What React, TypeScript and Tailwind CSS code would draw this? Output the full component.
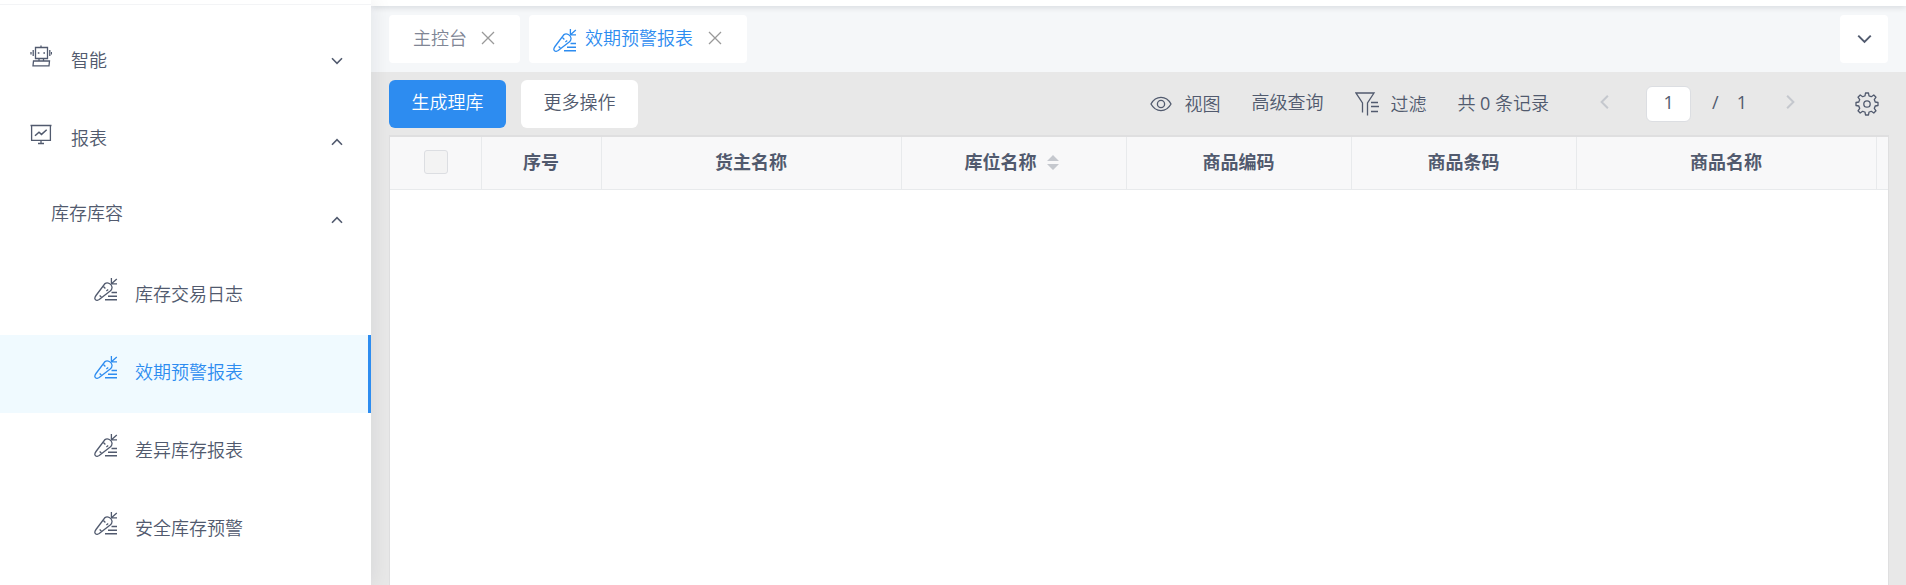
import type { ReactNode } from "react";

type IconProps = { className?: string };

function RobotIcon({ className }: IconProps) {
  return (
    <svg className={className} viewBox="0 0 22 22" fill="none" stroke="currentColor" strokeWidth="1.3" aria-hidden="true">
      <path d="M11 0.5v2M5.5 2.5h12v11h-12zM9 13.5v2.5M13.5 13.5v2.5M3.5 16h16l-0.5 4.8H3z" />
      <path d="M3.2 5v6M1 7v2.4M19.8 5v6M21.6 7v2.4" />
      <path d="M7.8 8h1.6M13.4 8h1.6" strokeWidth="1.6" />
    </svg>
  );
}

function ReportIcon({ className }: IconProps) {
  return (
    <svg className={className} viewBox="0 0 22 22" fill="none" stroke="currentColor" strokeWidth="1.3" aria-hidden="true">
      <path d="M0.5 2.5h21M1.6 2.5v14.8h18.8V2.5M11 17.3v3.2M8 20.5h6" />
      <path d="M5 12.8l4-3.6 2.5 2.2 5.2-4.6" strokeWidth="1.5" />
    </svg>
  );
}

function CarrotIcon({ className }: IconProps) {
  return (
    <svg className={className} viewBox="0 0 24 24" fill="none" stroke="currentColor" strokeWidth="1.3" aria-hidden="true">
      <path d="M11 6.6c2.600-1.800 6.600 0.400 7 3.400 0.200 1.800-0.600 3.100-1.800 4.100L5.200 22.600c-1.500 1.100-3.400 1-4.100-0.300-0.600-1.100-0.200-2.300 0.900-3.800z" />
      <path d="M17.400 1v5.800h5.600M17.200 7l5.600-5M9.400 9.500l2 2M5.600 18.400l1.800 1.500M12.400 14l1.800-1.500" />
      <path d="M17.500 15.500H23M14 19.300h9M11 22.800h12" strokeWidth="1.400" />
    </svg>
  );
}

function EyeIcon({ className }: IconProps) {
  return (
    <svg className={className} viewBox="0 0 22 16" fill="none" stroke="currentColor" strokeWidth="1.3" aria-hidden="true">
      <path d="M1 8c2.2-4 6-6.600 10-6.600S18.800 4 21 8c-2.200 4-6 6.600-10 6.600S3.200 12 1 8z" />
      <circle cx="11" cy="8" r="3.600" />
    </svg>
  );
}

function FilterIcon({ className }: IconProps) {
  return (
    <svg className={className} viewBox="0 0 24 24" fill="none" stroke="currentColor" strokeWidth="1.3" aria-hidden="true">
      <path d="M7.500 20.500V11L1 1h18l-6.500 10v12.500" />
      <path d="M16 10.500h7M16 14.500h8M16 19.500h7" />
    </svg>
  );
}

function GearIcon({ className }: IconProps) {
  return (
    <svg className={className} viewBox="0 0 24 24" fill="none" stroke="currentColor" strokeWidth="1.3" strokeLinejoin="round" aria-hidden="true">
      <path d="M10.500 1h3l0.500 2.800q1.700 0.500 2.300 0.900l2.500-1.700 2.200 2.200-1.700 2.500q0.700 1.300 0.900 2.300L23 10.500v3l-2.800 0.500q-0.300 1.200-0.900 2.300l1.700 2.500-2.200 2.200-2.500-1.700q-1.200 0.700-2.300 0.900L13.500 23h-3l-0.500-2.800q-1.200-0.300-2.300-0.900l-2.500 1.700-2.200-2.200 1.700-2.500q-0.600-1.100-0.900-2.300L1 13.500v-3l2.800-0.500q0.300-1.200 0.900-2.300L3 5.200 5.200 3l2.500 1.700q1.100-0.600 2.300-0.900z" />
      <circle cx="12" cy="12" r="3.200" />
    </svg>
  );
}

function Chevron({ className }: IconProps) {
  return (
    <svg className={className} viewBox="0 0 12 8" fill="none" stroke="currentColor" strokeWidth="1.600" aria-hidden="true">
      <path d="M1 1.300l5 5 5-5" />
    </svg>
  );
}

function CloseIcon() {
  return (
    <svg className="h-3.5 w-3.5" viewBox="0 0 14 14" fill="none" stroke="currentColor" strokeWidth="1.300" aria-hidden="true">
      <path d="M1 1l12 12M13 1L1 13" />
    </svg>
  );
}

const reports = [
  { name: "库存交易日志", active: false },
  { name: "效期预警报表", active: true },
  { name: "差异库存报表", active: false },
  { name: "安全库存预警", active: false },
];

const columns = [
  { name: "序号", width: "w-[120px]" },
  { name: "货主名称", width: "w-[300px]" },
  { name: "库位名称", width: "w-[225px]", sortable: true },
  { name: "商品编码", width: "w-[225px]" },
  { name: "商品条码", width: "w-[225px]" },
  { name: "商品名称", width: "w-[300px]" },
];

function MenuGroup({ icon, name, open }: { icon: ReactNode; name: string; open: boolean }) {
  return (
    <button type="button" aria-expanded={open} className="flex h-[78px] w-full items-center pr-7 pb-1 pl-[30px] text-left">
      {icon}
      <span className="ml-[19px] flex-1">{name}</span>
      <Chevron className={open ? "mt-2 h-2 w-3 rotate-180" : "mt-0.5 h-2 w-3"} />
    </button>
  );
}

function Sidebar() {
  return (
    <aside className="z-10 w-[371px] shrink-0 bg-white pt-1 shadow-[2px_0_20px_rgba(0,21,41,0.08)]">
      <nav className="border-t border-gray-100 pt-[18px]">
        <MenuGroup icon={<RobotIcon className="mb-2 h-[22px] w-[22px]" />} name="智能" open={false} />
        <MenuGroup icon={<ReportIcon className="mb-2 h-[22px] w-[22px]" />} name="报表" open />
        <button type="button" aria-expanded="true" className="flex h-[78px] w-full items-center pr-7 pb-1 pl-[51px] text-left">
          <span className="mb-1.5 flex-1">库存库容</span>
          <Chevron className="mt-2 h-2 w-3 rotate-180" />
        </button>
        {reports.map((item) => (
          <a
            key={item.name}
            href="#"
            className={
              item.active
                ? "flex h-[78px] items-center border-r-3 border-[#2d8cf0] bg-[#f0faff] pb-1 pl-[94px] text-[#2d8cf0]"
                : "flex h-[78px] items-center pb-1 pl-[94px]"
            }
          >
            <CarrotIcon className="mb-2.5 h-6 w-6" />
            <span className="ml-[17px]">{item.name}</span>
          </a>
        ))}
      </nav>
    </aside>
  );
}

function Tabs() {
  return (
    <div className="flex h-[66px] items-center bg-[#f5f7f9] px-[18px]">
      <div className="flex h-12 items-center rounded bg-white px-6 text-[#808695]">
        <a href="#" className="pb-0.5">主控台</a>
        <button type="button" aria-label="关闭" className="mr-px mb-0.5 ml-[14px] text-[#999]">
          <CloseIcon />
        </button>
      </div>
      <div className="ml-[9px] flex h-12 items-center rounded bg-white px-6 text-[#2d8cf0]">
        <a href="#" className="flex items-center pb-0.5">
          <CarrotIcon className="mt-1 mr-2 h-6 w-6" />
          效期预警报表
        </a>
        <button type="button" aria-label="关闭" className="mr-px mb-0.5 ml-[15px] text-[#999]">
          <CloseIcon />
        </button>
      </div>
      <button type="button" aria-label="更多标签" className="ml-auto flex h-12 w-12 items-center justify-center rounded-sm bg-white">
        <Chevron className="h-[10px] w-[15px]" />
      </button>
    </div>
  );
}

function Toolbar() {
  return (
    <div className="flex h-[63px] items-center pr-[27px] pl-[18px]">
      <button type="button" className="h-12 w-[117px] rounded-md bg-[#2d8cf0] pb-1 text-white">
        生成理库
      </button>
      <button type="button" className="ml-[15px] h-12 w-[117px] rounded-md bg-white pb-1">
        更多操作
      </button>
      <div className="ml-auto flex items-center">
        <button type="button" className="flex items-center">
          <EyeIcon className="mr-3 h-4 w-[22px]" />
          视图
        </button>
        <button type="button" className="ml-[31px] pb-1">高级查询</button>
        <button type="button" className="ml-8 flex items-center">
          <FilterIcon className="mr-[11px] h-6 w-6" />
          过滤
        </button>
        <span className="ml-[31px] pb-0.5">
          共 <span className="font-normal">0</span> 条记录
        </span>
        <button type="button" aria-label="上一页" disabled className="ml-12 pb-1 text-[#c5c8ce]">
          <Chevron className="h-[10px] w-[15px] rotate-90" />
        </button>
        <input
          aria-label="页码"
          defaultValue="1"
          className="ml-[34px] h-9 w-[45px] rounded-md border border-[#dcdee2] bg-white pb-1 text-center font-normal"
        />
        <span className="ml-[21px] pb-1 font-normal">/</span>
        <span className="ml-[18px] pb-1 font-normal">1</span>
        <button type="button" aria-label="下一页" disabled className="ml-9 pb-1 text-[#c5c8ce]">
          <Chevron className="h-[10px] w-[15px] -rotate-90" />
        </button>
        <button type="button" aria-label="设置" className="ml-[57px]">
          <GearIcon className="h-6 w-6" />
        </button>
      </div>
    </div>
  );
}

function DataTable() {
  return (
    <div className="mr-[17px] ml-[18px] flex-1 border-x border-t-2 border-[#dfdfe0] bg-white">
      <table className="w-full table-fixed border-separate border-spacing-0">
        <thead>
          <tr className="h-[53px] bg-[#f8f8f9]">
            <th className="w-[92px] border-r border-b border-[#e8eaec] p-0 pb-0.5">
              <input
                type="checkbox"
                aria-label="全选"
                disabled
                className="mx-auto block h-6 w-6 appearance-none rounded-[3px] border border-[#dcdee2] bg-[#f3f3f3]"
              />
            </th>
            {columns.map((col) => (
              <th key={col.name} className={`${col.width} border-r border-b border-[#e8eaec] p-0 pr-px pb-0.5 font-bold`}>
                <div className="flex items-center justify-center">
                  {col.name}
                  {col.sortable && (
                    <button type="button" aria-label="排序" className="mr-1 ml-[10px] text-[#c5c8ce]">
                      <svg className="h-[15px] w-3" viewBox="0 0 12 15" fill="currentColor" aria-hidden="true">
                        <path d="M6 0l6 6H0zM6 15l6-6H0z" />
                      </svg>
                    </button>
                  )}
                </div>
              </th>
            ))}
            <td className="border-b border-[#e8eaec]" />
          </tr>
        </thead>
      </table>
    </div>
  );
}

export default function App() {
  return (
    <div className="flex min-h-screen overflow-hidden bg-[#e8e8e8] font-['Open_Sans','Noto_Sans_CJK_SC',sans-serif] text-lg leading-7 font-[350] text-[#515a6e]">
      <Sidebar />
      <main className="flex min-w-0 flex-1 flex-col">
        <header className="z-1 h-1.5 bg-white shadow-[0_1px_6px_rgba(0,21,41,0.15)]" />
        <Tabs />
        <Toolbar />
        <DataTable />
      </main>
    </div>
  );
}
